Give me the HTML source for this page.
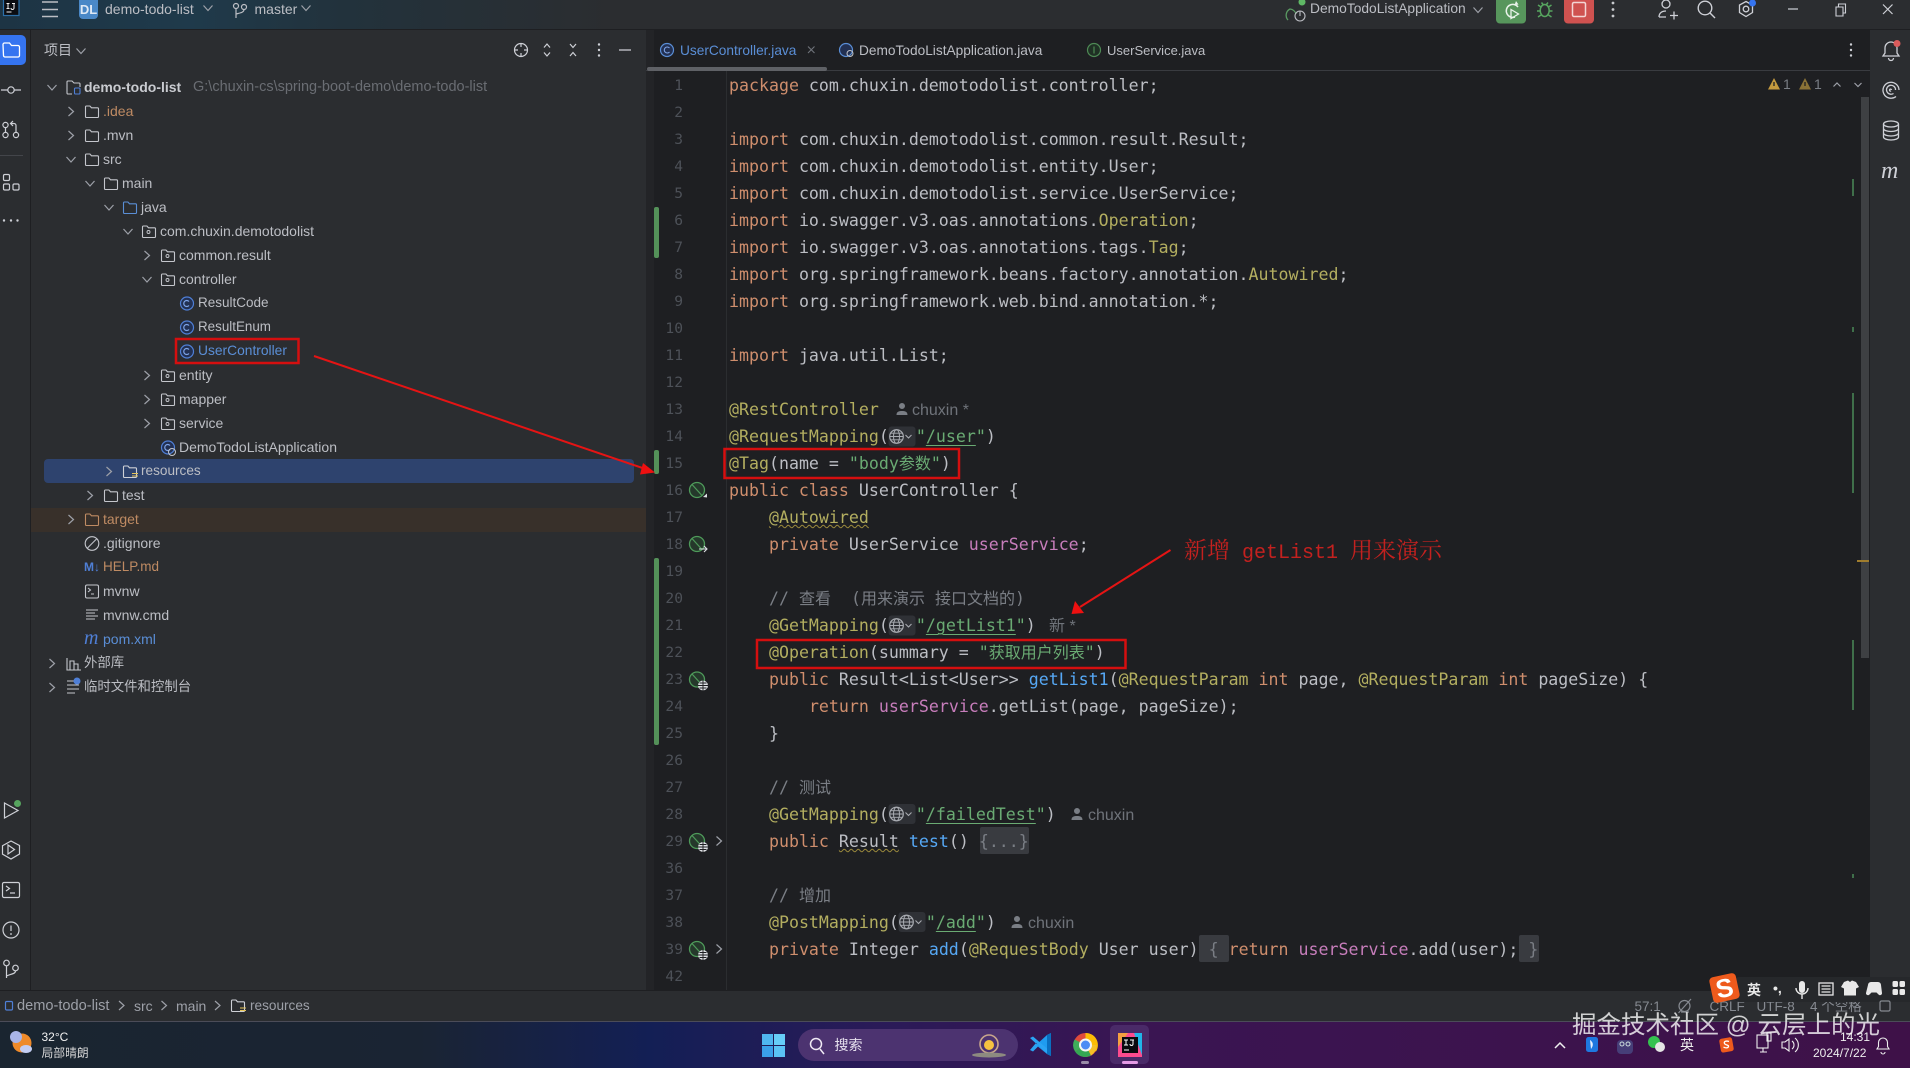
<!DOCTYPE html>
<html lang="zh">
<head>
<meta charset="utf-8">
<title>demo-todo-list</title>
<style>
html,body{margin:0;padding:0;background:#2b2d30}
body{width:1910px;height:1068px;overflow:hidden;position:relative;font-family:"Liberation Sans","Noto Sans CJK SC",sans-serif;font-size:14px;color:#bcbec4}
.b{position:absolute}
.t{position:absolute;white-space:pre;line-height:24px;font-size:14px;color:#bcbec4}
.o{color:#bf8b63}
.bl{color:#5a8ed6}
pre{margin:0;position:absolute;left:729px;top:72px;font-family:"DejaVu Sans Mono","Noto Sans CJK SC",monospace;font-size:16.6px;line-height:27px;color:#bcbec4}
#nums{left:645px;width:38px;text-align:right;font-size:14.6px;color:#4d5158}
i{font-style:normal}
.z{font-size:16px;font-weight:normal}
.k{color:#cf8e6d}.a{color:#b3ae60}.s{color:#6aab73}.f{color:#c77dbb}.m{color:#56a8f5}.c{color:#7a7e85}
.u{text-decoration:underline;text-decoration-thickness:1px;text-underline-offset:3px}
.w{text-decoration:underline wavy #9c8a3c 1px}
.g{display:inline-block;width:27px;height:1px}
.h{position:absolute;white-space:pre;font-size:16px;line-height:27px;color:#6f737a}
</style>
</head>
<body>
<!-- backgrounds -->
<div class="b" style="left:0;top:0;width:1910px;height:29px;background:linear-gradient(90deg,#1d3444 0,#1f3a4b 10%,#22323c 18%,#2b2d30 32%)"></div>
<div class="b" style="left:0;top:29px;width:1910px;height:1px;background:#1e1f22"></div>
<div class="b" style="left:30px;top:30px;width:1px;height:960px;background:#1e1f22"></div>
<div class="b" style="left:646px;top:30px;width:1224px;height:960px;background:#1e1f22"></div>
<div class="b" style="left:646px;top:30px;width:8px;height:960px;background:#232427"></div>
<div class="b" style="left:646px;top:70px;width:1224px;height:1px;background:#393b40"></div>
<div class="b" style="left:647px;top:67px;width:180px;height:4px;border-radius:2px;background:#5f6166"></div>
<div class="b" style="left:726px;top:71px;width:1px;height:919px;background:#2b2d30"></div>
<div class="b" style="left:1861px;top:97px;width:8px;height:561px;background:#3e4043"></div>
<div class="b" style="left:1851.500px;top:179px;width:2px;height:17px;background:#3f6f4a"></div>
<div class="b" style="left:1851.500px;top:327px;width:2px;height:5px;background:#3f6f4a"></div>
<div class="b" style="left:1851.500px;top:393px;width:2px;height:100px;background:#3f6f4a"></div>
<div class="b" style="left:1851.500px;top:640px;width:2px;height:70px;background:#3f6f4a"></div>
<div class="b" style="left:1857px;top:560px;width:12px;height:2px;background:#a07d2e"></div>
<div class="b" style="left:1851.500px;top:874px;width:2px;height:4px;background:#3f6f4a"></div>
<div class="b" style="left:44px;top:459px;width:589.500px;height:24px;background:#2e436e;border-radius:4px"></div>
<div class="b" style="left:31px;top:507.500px;width:615px;height:24px;background:#38302a"></div>
<div class="b" style="left:0;top:35px;width:26px;height:30px;background:#3574f0;border-radius:0 5px 5px 0"></div>
<div class="b" style="left:0;top:155px;width:23px;height:1px;background:#43454a"></div>
<div class="b" style="left:654px;top:207px;width:5px;height:51px;background:#549159;border-radius:2px"></div>
<div class="b" style="left:654px;top:450px;width:5px;height:24px;background:#549159;border-radius:2px"></div>
<div class="b" style="left:654px;top:558px;width:5px;height:187px;background:#549159;border-radius:2px"></div>
<div class="b" style="left:979.500px;top:827px;width:49.500px;height:27px;background:#393b40;border-radius:2px"></div>
<div class="b" style="left:1199px;top:935px;width:30px;height:27px;background:#393b40;border-radius:2px"></div>
<div class="b" style="left:1519px;top:935px;width:20px;height:27px;background:#393b40;border-radius:2px"></div>
<div class="b" style="left:0;top:990px;width:1910px;height:1px;background:#1e1f22"></div>
<div class="b" style="left:0;top:1022px;width:1910px;height:46px;background:linear-gradient(90deg,#1a2530 0,#1a2433 22%,#131f55 34%,#2a1a58 46%,#3a1552 60%,#3e1148 100%)"></div>
<div class="b" style="left:0;top:1021px;width:1910px;height:1px;background:#4b4c58"></div>
<div class="b" style="left:798px;top:1029px;width:219.500px;height:32px;border-radius:16px;background:#4c3370"></div>
<div class="b" style="left:1110px;top:1025px;width:39px;height:39px;border-radius:5px;background:#4a2a68"></div>
<div class="b" style="left:1122px;top:1061px;width:16px;height:3px;border-radius:2px;background:#e59ae6"></div>
<div class="b" style="left:1081px;top:1061px;width:8px;height:3px;border-radius:2px;background:#9a8ca8"></div>

<!-- title bar text -->
<div class="b" style="left:79px;top:0;width:19px;height:19px;background:#4a88c7;border-radius:0 0 4px 4px;color:#dfe9f5;font-size:13px;font-weight:bold;line-height:19px;text-align:center">DL</div>
<div class="t" style="left:105px;top:-3px">demo-todo-list</div>
<div class="t" style="left:254.500px;top:-3px">master</div>
<div class="t" style="left:1310px;top:-3px;font-size:13.8px">DemoTodoListApplication</div>

<!-- project header -->
<div class="t" style="left:44px;top:38px;font-size:14px">项目</div>

<!-- tree -->
<div class="t" style="left:84px;top:75px;font-weight:bold;color:#c9cbd0">demo-todo-list</div>
<div class="t" style="left:193px;top:75px;color:#6a6d73;font-size:14.5px">G:\chuxin-cs\spring-boot-demo\demo-todo-list</div>
<div class="t o" style="left:103px;top:99px">.idea</div>
<div class="t" style="left:103px;top:123px">.mvn</div>
<div class="t" style="left:103px;top:147px">src</div>
<div class="t" style="left:122px;top:171px">main</div>
<div class="t" style="left:141px;top:195px">java</div>
<div class="t" style="left:160px;top:219px">com.chuxin.demotodolist</div>
<div class="t" style="left:179px;top:243px">common.result</div>
<div class="t" style="left:179px;top:267px">controller</div>
<div class="t" style="left:198px;top:291px;font-size:13.5px">ResultCode</div>
<div class="t" style="left:198px;top:315px;font-size:13.4px">ResultEnum</div>
<div class="t bl" style="left:198px;top:339px;font-size:13.8px">UserController</div>
<div class="t" style="left:179px;top:363px">entity</div>
<div class="t" style="left:179px;top:387px">mapper</div>
<div class="t" style="left:179px;top:411px">service</div>
<div class="t" style="left:179px;top:435px">DemoTodoListApplication</div>
<div class="t" style="left:141px;top:459px;font-size:13.6px">resources</div>
<div class="t" style="left:122px;top:483px">test</div>
<div class="t o" style="left:103px;top:507px">target</div>
<div class="t" style="left:103px;top:531px">.gitignore</div>
<div class="t o" style="left:103px;top:555px;font-size:13.5px">HELP.md</div>
<div class="t" style="left:103px;top:579px">mvnw</div>
<div class="t" style="left:103px;top:603px">mvnw.cmd</div>
<div class="t bl" style="left:103px;top:627px">pom.xml</div>
<div class="t" style="left:84px;top:651px;font-size:13.4px">外部库</div>
<div class="t" style="left:84px;top:675px;font-size:13.4px">临时文件和控制台</div>
<div class="t" style="left:84px;top:555px;color:#4f7fd6;font-weight:bold;font-size:12px;line-height:24px;width:16px">M↓</div>
<div class="t" style="left:84px;top:627px;color:#4f7fd6;font-style:italic;font-size:20px;font-family:'Liberation Serif',serif;line-height:22px">m</div>

<!-- tabs -->
<div class="t" style="left:680px;top:38.500px;color:#5a8ed6;font-size:13.7px">UserController.java</div>
<div class="t" style="left:859px;top:38.500px;font-size:13.7px">DemoTodoListApplication.java</div>
<div class="t" style="left:1107px;top:38.500px;font-size:13px">UserService.java</div>

<!-- warnings -->
<div class="t" style="left:1783px;top:72px;color:#7a7e85;font-size:14px">1</div>
<div class="t" style="left:1814px;top:72px;color:#7a7e85;font-size:14px">1</div>

<!-- line numbers -->
<pre id="nums">1
2
3
4
5
6
7
8
9
10
11
12
13
14
15
16
17
18
19
20
21
22
23
24
25
26
27
28
29
36
37
38
39
42</pre>

<!-- code -->
<pre><i class="k">package</i> com.chuxin.demotodolist.controller;

<i class="k">import</i> com.chuxin.demotodolist.common.result.Result;
<i class="k">import</i> com.chuxin.demotodolist.entity.User;
<i class="k">import</i> com.chuxin.demotodolist.service.UserService;
<i class="k">import</i> io.swagger.v3.oas.annotations.<i class="a">Operation</i>;
<i class="k">import</i> io.swagger.v3.oas.annotations.tags.<i class="a">Tag</i>;
<i class="k">import</i> org.springframework.beans.factory.annotation.<i class="a">Autowired</i>;
<i class="k">import</i> org.springframework.web.bind.annotation.*;

<i class="k">import</i> java.util.List;

<i class="a">@RestController</i>
<i class="a">@RequestMapping</i>(<span class="g"></span><i class="s">"<i class="u">/user</i>"</i>)
<i class="a">@Tag</i>(name = <i class="s">"body<i class="z">参数</i>"</i>)
<i class="k">public class</i> UserController {
    <i class="a w">@Autowired</i>
    <i class="k">private</i> UserService <i class="f">userService</i>;

    <i class="c">// <i class="z">查看</i>  (<i class="z">用来演示</i> <i class="z">接口文档的</i>)</i>
    <i class="a">@GetMapping</i>(<span class="g"></span><i class="s">"<i class="u">/getList1</i>"</i>)
    <i class="a">@Operation</i>(summary = <i class="s">"<i class="z">获取用户列表</i>"</i>)
    <i class="k">public</i> Result&lt;List&lt;User&gt;&gt; <i class="m">getList1</i>(<i class="a">@RequestParam</i> <i class="k">int</i> page, <i class="a">@RequestParam</i> <i class="k">int</i> pageSize) {
        <i class="k">return</i> <i class="f">userService</i>.getList(page, pageSize);
    }

    <i class="c">// <i class="z">测试</i></i>
    <i class="a">@GetMapping</i>(<span class="g"></span><i class="s">"<i class="u">/failedTest</i>"</i>)
    <i class="k">public</i> <i class="w">Result</i> <i class="m">test</i>() <i class="c">{...}</i>

    <i class="c">// <i class="z">增加</i></i>
    <i class="a">@PostMapping</i>(<span class="g"></span><i class="s">"<i class="u">/add</i>"</i>)
    <i class="k">private</i> Integer <i class="m">add</i>(<i class="a">@RequestBody</i> User user)<i class="c"> { </i><i class="k">return</i> <i class="f">userService</i>.add(user);<i class="c"> }</i></pre>

<!-- inlay hints -->
<div class="h" style="left:912px;top:397px">chuxin *</div>
<div class="h" style="left:1049px;top:613px">新 *</div>
<div class="h" style="left:1088px;top:802px">chuxin</div>
<div class="h" style="left:1028px;top:910px">chuxin</div>

<!-- status bar -->
<div class="t" style="left:17px;top:993.500px;color:#9da0a8;font-size:14.6px">demo-todo-list</div>
<div class="t" style="left:134px;top:993.500px;color:#9da0a8">src</div>
<div class="t" style="left:176px;top:993.500px;color:#9da0a8">main</div>
<div class="t" style="left:250px;top:993.500px;color:#9da0a8;font-size:13.6px">resources</div>
<div class="t" style="left:1634.500px;top:994.500px;color:#868a91;font-size:13.5px">57:1</div>
<div class="t" style="left:1709.500px;top:994.500px;color:#868a91;font-size:13.5px">CRLF</div>
<div class="t" style="left:1756.500px;top:994.500px;color:#868a91;font-size:13.5px">UTF-8</div>
<div class="t" style="left:1810px;top:994.500px;color:#868a91;font-size:13.5px">4 个空格</div>

<!-- sogou bar -->
<div class="b" style="left:1735px;top:977px;width:175px;height:25px;background:#26282b;border-radius:4px 0 0 4px"></div>
<div class="b" style="left:1711px;top:975px;width:27px;height:26px;background:#ee5a1c;border-radius:4px;transform:rotate(-12deg);color:#fff;font:bold 26px/26px 'Liberation Sans',sans-serif;text-align:center">S</div>
<div class="t" style="left:1747px;top:978px;color:#e8e8e8;font-weight:bold;font-size:14px">英</div>
<div class="t" style="left:1773px;top:976px;color:#e8e8e8;font-weight:bold;font-size:14px">•,</div>

<!-- taskbar text -->
<div class="t" style="left:41.500px;top:1025px;color:#f0f0f0;font-size:12px">32°C</div>
<div class="t" style="left:41.500px;top:1041px;color:#d8d8d8;font-size:11.8px">局部晴朗</div>
<div class="t" style="left:834.500px;top:1033px;color:#e6e0ee;font-size:14px">搜索</div>
<div class="t" style="left:1680px;top:1033px;color:#eee;font-size:14px">英</div>
<div class="t" style="left:1840px;top:1025px;color:#eee;font-size:12px">14:31</div>
<div class="t" style="left:1813px;top:1041px;color:#eee;font-size:12px">2024/7/22</div>

<!-- svg overlay -->
<svg class="b" style="left:0;top:0" width="1910" height="1068" viewBox="0 0 1910 1068" fill="none">
<defs>
<path id="cr" d="M-2.500 -4.500L2.500 0L-2.500 4.500" stroke="#9da0a8" stroke-width="1.200"/>
<path id="cd" d="M-4.500 -2.500L0 2.500L4.500 -2.500" stroke="#9da0a8" stroke-width="1.200"/>
<path id="fo" d="M-6.500 -4.500a1 1 0 0 1 1-1h3.400l1.600 1.800h6a1 1 0 0 1 1 1v7.700a1 1 0 0 1-1 1h-11a1 1 0 0 1-1-1z" stroke-width="1.100"/>
<g id="pk"><use href="#fo" stroke="#c4c6cc"/><rect x="-2" y="-1" width="3" height="3" rx="1.500" stroke="#c4c6cc" stroke-width=".9"/></g>
<g id="cl"><circle r="6.500" stroke="#4f7fd6" stroke-width="1.200" fill="#223052"/><path d="M2 -2a3 3 0 1 0 0 4" stroke="#7ea4e8" stroke-width="1.200"/></g>
<g id="gl"><rect x="-8" y="-10" width="27" height="20" rx="3" fill="#2f3136"/><circle cx="0" cy="0" r="6.800" stroke="#a8abb1" stroke-width="1.200"/><ellipse rx="3" ry="6.800" stroke="#a8abb1" stroke-width="1"/><path d="M-6.800 0H6.800M-5.800 -3.300H5.800M-5.800 3.300H5.800" stroke="#a8abb1" stroke-width=".9"/><path d="M9 -1.500L12 1.500L15 -1.500" stroke="#a8abb1" stroke-width="1.100"/></g>
<g id="sp"><circle r="7.500" stroke="#4e9a5a" stroke-width="1.300" fill="#25382b"/><path d="M-5 -5.500L5 5.500" stroke="#4e9a5a" stroke-width="1.200"/></g>
<g id="sg"><use href="#sp"/><circle cx="6" cy="6" r="5" fill="#dfe1e5"/><path d="M1 6H11M6 1V11M2.500 3.500H9.500M2.500 8.500H9.500" stroke="#1e1f22" stroke-width=".9"/></g>
<path id="pe" d="M-3 -4a3 3 0 1 1 6 0a3 3 0 1 1-6 0zM-5.500 5c0-3.500 2.500-4 5.500-4s5.500 .5 5.500 4z" fill="#7a7e85"/>
</defs>

<!-- top bar icons -->
<rect x="3.500" y="-1" width="15.500" height="16.500" fill="#0b0d12" stroke="#2c6fa8" stroke-width="1.200"/>
<path d="M6.500 3.500h3M8 3.500v5M6.500 8.500h3M12 3.500h3M14 3.500v4.500a1.500 1.500 0 0 1-3 0M6.500 12h5" stroke="#f0f0f0" stroke-width="1"/>
<path d="M42 2H58M42 9.500H58M42 16.500H58" stroke="#bcbec4" stroke-width="1.400"/>
<use href="#cd" x="208" y="8"/><use href="#cd" x="306" y="8"/>
<g stroke="#bcbec4" stroke-width="1.200"><circle cx="236" cy="6" r="2.500"/><circle cx="244" cy="7" r="2.500"/><path d="M236 8.500V18M244 9.500c0 3-4 3.500-8 4.500"/></g>
<g stroke="#5a9a62" stroke-width="1.300"><path d="M1296 14a7 7 0 0 0-6-5 7 7 0 0 0-2 11"/></g>
<circle cx="1302" cy="2" r="3.500" fill="#5fb865"/>
<g stroke="#bcbec4" stroke-width="1.100"><circle cx="1300" cy="16" r="5"/><path d="M1300 11v5"/></g>
<use href="#cd" x="1478" y="10"/>
<rect x="1496" y="-4" width="30" height="27.500" rx="4" fill="#57965c"/>
<path d="M1518 7a6.500 6.500 0 1 0-3 10" stroke="#e9f3ea" stroke-width="1.500"/>
<path d="M1511 9.500l7.500 4.500l-7.500 4.500z" stroke="#e9f3ea" stroke-width="1.300"/>
<path d="M1516 1l2.500 3.500l-4 .8z" fill="#e9f3ea"/>
<g stroke="#57a55f" stroke-width="1.500"><ellipse cx="1544.700" cy="10.500" rx="4.500" ry="6"/><path d="M1538 5l3 2M1551.500 5l-3 2M1537 11h3M1552.500 11h-3M1538 17l3-2M1551.500 17l-3-2M1541.500 2.500l1.500 2M1548 2.500l-1.500 2"/></g>
<rect x="1564" y="-4" width="30" height="27.500" rx="4" fill="#cf5250"/>
<rect x="1572.500" y="2.500" width="13" height="14" rx="1.500" stroke="#f3d6d5" stroke-width="1.500"/>
<g fill="#c8cace"><circle cx="1613" cy="3" r="1.400"/><circle cx="1613" cy="9.500" r="1.400"/><circle cx="1613" cy="16" r="1.400"/></g>
<g stroke="#ced0d6" stroke-width="1.300"><circle cx="1666" cy="4" r="4"/><path d="M1659 17c0-4 3-6 7-6M1659 17h7M1670 15.500h8M1674 11.500v8"/></g>
<g stroke="#ced0d6" stroke-width="1.400"><circle cx="1705" cy="8" r="6.800"/><path d="M1710 13l5 5"/></g>
<g stroke="#ced0d6" stroke-width="1.300"><path d="M1746 1.500l6.500 3.500v7.500l-6.500 4l-6.500-4v-7.500z"/><circle cx="1746" cy="9" r="2.800"/></g>
<circle cx="1752.500" cy="3" r="3.500" fill="#3574f0"/>
<path d="M1788 9H1798" stroke="#ced0d6" stroke-width="1.200"/>
<path d="M1836 7h7v9h-7zM1838.500 7V4h7v9h-2.500" stroke="#ced0d6" stroke-width="1.100"/>
<path d="M1883 4.500l9.500 9.500M1892.500 4.500l-9.500 9.500" stroke="#ced0d6" stroke-width="1.200"/>

<!-- left strip -->
<path d="M3 44.500a1.500 1.500 0 0 1 1.500-1.500h5l2 2.500h6.500a1.500 1.500 0 0 1 1.500 1.500v8.500a1.500 1.500 0 0 1-1.500 1.500h-13a1.500 1.500 0 0 1-1.500-1.500z" stroke="#fff" stroke-width="1.300"/>
<g stroke="#ced0d6" stroke-width="1.200">
<circle cx="11" cy="90" r="3.200"/><path d="M1 90H7.500M14.500 90H21"/>
<circle cx="5.500" cy="125" r="2.600"/><circle cx="5.500" cy="135" r="2.600"/><circle cx="16" cy="135" r="2.600"/><path d="M5.500 127.500V132.500M16 132.500V125.500a2 2 0 0 0-2-2H11M13 121l-2.500 2.500L13 126"/>
<rect x="3.500" y="174.500" width="6" height="6" rx="1.300"/><rect x="3.500" y="184" width="6" height="6" rx="1.300"/><rect x="13" y="184" width="6" height="6" rx="1.300"/>
<path d="M4.500 803l13.500 7.500L4.500 818z"/>
<path d="M11 842l8.500 4.500v8.500L11 860l-8.500-4.800v-8.500z M8 846l6.500 4.500L8 855z" transform="translate(0,-1)"/>
<rect x="2.500" y="882.500" width="17" height="15" rx="1.500"/><path d="M6 886l3.500 2.500L6 891M10 893h5"/>
<circle cx="11" cy="930" r="8"/><path d="M11 925.500V931M11 933V935"/>
<circle cx="6.500" cy="963" r="2.800"/><circle cx="15.500" cy="968" r="2.800"/><path d="M6.500 966V978M15.500 971c0 3-5 3-9 5"/>
</g>
<g fill="#ced0d6"><circle cx="4" cy="220.500" r="1.200"/><circle cx="11" cy="220.500" r="1.200"/><circle cx="17.500" cy="220.500" r="1.200"/></g>
<circle cx="17.500" cy="803.500" r="3.500" fill="#57a55f"/>

<!-- right strip -->
<g stroke="#ced0d6" stroke-width="1.300">
<path d="M1891 42a6 6 0 0 0-6 6v5l-2 3h16l-2-3v-5a6 6 0 0 0-6-6zM1888.500 58a2.500 2.500 0 0 0 5 0"/>
<path d="M1899 90a8 8 0 1 0-3 6.500M1895.500 90a4.500 4.500 0 1 0-2 3.500M1891.500 90a1 1 0 1 0-.5 1"/>
<ellipse cx="1891" cy="124" rx="7.500" ry="3"/><path d="M1883.500 124V137c0 1.700 3.300 3 7.500 3s7.500-1.300 7.500-3V124M1883.500 128.500c0 1.700 3.300 3 7.500 3s7.500-1.300 7.500-3M1883.500 133c0 1.700 3.300 3 7.500 3s7.500-1.300 7.500-3"/>
</g>
<circle cx="1897" cy="43.500" r="3.500" fill="#db5c5c"/>
<text x="1881" y="178" font-family="Liberation Serif,serif" font-style="italic" font-size="24" fill="#ced0d6">m</text>

<!-- project header icons -->
<use href="#cd" x="81" y="51"/>
<g stroke="#ced0d6" stroke-width="1.200">
<circle cx="521" cy="50" r="6.500"/><path d="M521 43v4M521 53v4M514 50h4M524 50h4"/>
<path d="M544 47.500l3-3.500l3 3.500M544 52.500l3 3.500l3-3.500M570 44l3 3.500l3-3.500M570 56l3-3.500l3 3.500M619 50H631"/>
</g>
<g fill="#ced0d6"><circle cx="599" cy="44.500" r="1.200"/><circle cx="599" cy="50" r="1.200"/><circle cx="599" cy="55.500" r="1.200"/>
<circle cx="1851" cy="44.500" r="1.200"/><circle cx="1851" cy="50" r="1.200"/><circle cx="1851" cy="55.500" r="1.200"/></g>

<!-- chevrons -->
<use href="#cd" x="52" y="87.500"/><use href="#cr" x="71" y="111.500"/><use href="#cr" x="71" y="135.500"/><use href="#cd" x="71" y="159.500"/><use href="#cd" x="90" y="183.500"/><use href="#cd" x="109" y="207.500"/><use href="#cd" x="128" y="231.500"/><use href="#cr" x="147" y="255.500"/><use href="#cd" x="147" y="279.500"/><use href="#cr" x="147" y="375.500"/><use href="#cr" x="147" y="399.500"/><use href="#cr" x="147" y="423.500"/><use href="#cr" x="109" y="471.500"/><use href="#cr" x="90" y="495.500"/><use href="#cr" x="71" y="519.500"/><use href="#cr" x="52" y="663.500"/><use href="#cr" x="52" y="687.500"/>

<!-- tree icons -->
<g stroke="#c4c6cc">
<path d="M67 93V82a1 1 0 0 1 1-1h4l2 2h5a1 1 0 0 1 1 1v3M72 94h-4a1 1 0 0 1-1-1" stroke-width="1.100"/>
<use href="#fo" x="92" y="111.500"/><use href="#fo" x="92" y="135.500"/><use href="#fo" x="92" y="159.500"/><use href="#fo" x="111" y="183.500"/>
<use href="#fo" x="111" y="495.500"/>
</g>
<rect x="74.500" y="88" width="5.500" height="6" rx="1" stroke="#4f7fd6" stroke-width="1.100"/>
<use href="#fo" x="130" y="207.500" stroke="#5a8ed6"/>
<use href="#pk" x="149" y="231.500"/><use href="#pk" x="168" y="255.500"/><use href="#pk" x="168" y="279.500"/><use href="#pk" x="168" y="375.500"/><use href="#pk" x="168" y="399.500"/><use href="#pk" x="168" y="423.500"/>
<use href="#cl" x="187" y="303.500"/><use href="#cl" x="187" y="327.500"/><use href="#cl" x="187" y="351.500"/>
<use href="#cl" x="168" y="447.500"/>
<circle cx="172" cy="452" r="3.500" stroke="#c4c6cc" stroke-width="1"/>
<use href="#fo" x="130" y="471.500" stroke="#ced0d6"/>
<path d="M132 473.500h6M132 476h6" stroke="#e6c55a" stroke-width="1"/>
<use href="#fo" x="92" y="519.500" stroke="#bf8b63"/>
<g stroke="#c4c6cc" stroke-width="1.100">
<circle cx="92" cy="543.500" r="6.800"/><path d="M87.500 548L96.500 539"/>
<rect x="85.500" y="585" width="13" height="13" rx="1.500"/><path d="M88 588l2.500 2-2.500 2M91 594h3"/>
<path d="M86 610h12M86 613h9M86 616h12M86 619h9"/>
<path d="M67 658v12h14M70 670v-9h4v9M74 670v-6h4v6"/>
<path d="M67 681h8M67 685h12M67 689h12M67 693h8"/>
</g>
<circle cx="77" cy="681" r="3.500" fill="#4f7fd6"/>

<!-- tab icons -->
<g>
<circle cx="667" cy="50" r="6.500" stroke="#5a8ed6" stroke-width="1.200" fill="#223052"/><path d="M669.500 48a3 3 0 1 0 0 4" stroke="#7ea4e8" stroke-width="1.100"/>
<path d="M808 46.500l6.500 6.500M814.500 46.500l-6.500 6.500" stroke="#6f737a" stroke-width="1.100"/>
<circle cx="846" cy="50" r="6.500" stroke="#5a8ed6" stroke-width="1.200" fill="#223052"/><circle cx="850" cy="53.500" r="3" stroke="#c4c6cc" stroke-width="1"/>
<circle cx="1094" cy="50" r="6.500" stroke="#4e8a55" stroke-width="1.200" fill="#1f3024"/><path d="M1094 46.500V53.500" stroke="#4e8a55" stroke-width="1.200"/>
</g>

<!-- warning icons -->
<path d="M1774 78l6 11.500h-12z" fill="#c59a3e"/><path d="M1805 78l6 11.500h-12z" fill="#8a7236"/>
<path d="M1774 82v4M1805 82v4" stroke="#1e1f22" stroke-width="1.300"/>
<path d="M1833.500 86.500l3.500-3.500l3.500 3.500M1854.500 83l3.500 3.500l3.500-3.500" stroke="#9da0a8" stroke-width="1.200"/>

<!-- gutter icons -->
<use href="#sp" x="697" y="490"/><path d="M703 497l4-3.500v4z" fill="#dfe1e5"/>
<use href="#sp" x="697" y="544"/><path d="M699 549h8M704 546l3 3-3 3" stroke="#dfe1e5" stroke-width="1.100"/>
<use href="#sg" x="697" y="679.500"/><use href="#sg" x="697" y="841"/><use href="#sg" x="697" y="949"/>
<use href="#cr" x="719" y="841"/><use href="#cr" x="719" y="949"/>

<!-- inlay globes -->
<use href="#gl" x="896.500" y="436.500"/><use href="#gl" x="896.500" y="625.500"/><use href="#gl" x="896.500" y="814"/><use href="#gl" x="906.500" y="922"/>
<use href="#pe" x="902" y="410"/><use href="#pe" x="1077" y="815"/><use href="#pe" x="1017" y="923"/>

<!-- status icons -->
<rect x="5.500" y="1001.500" width="7" height="8.500" rx="1.200" stroke="#4f7fd6" stroke-width="1.200"/>
<use href="#cr" x="121.500" y="1005.500"/><use href="#cr" x="164" y="1005.500"/><use href="#cr" x="217.500" y="1005.500"/>
<use href="#fo" x="238" y="1005.500" stroke="#ced0d6"/>
<path d="M240 1008h6M240 1010.500h6" stroke="#e6c55a" stroke-width="1"/>
<g stroke="#868a91" stroke-width="1.200"><circle cx="1684.500" cy="1006" r="5.500"/><path d="M1678.500 1013L1691 999M1681 1012h8"/><rect x="1880" y="1001" width="10" height="10" rx="1.500"/></g>

<!-- sogou icons -->
<g fill="#e8e8e8">
<rect x="1799" y="981" width="6" height="12" rx="3"/><path d="M1796 988a6 6 0 0 0 12 0M1802 994v5" stroke="#e8e8e8" stroke-width="1.400" fill="none"/>
<rect x="1819" y="983" width="14" height="12" stroke="#e8e8e8" stroke-width="1.300" fill="none"/><path d="M1821.500 986h9M1821.500 989h9M1821.500 992h9" stroke="#e8e8e8" stroke-width="1.300"/>
<path d="M1844 982l4-1.500l2 1.500l2-1.500l4 1.500l3 5l-3 1.500v7h-12v-7l-3-1.500z"/>
<path d="M1868 985a3 3 0 0 1 3-3h7a3 3 0 0 1 3 3l1 8a2 2 0 0 1-3.500 1.500l-2-2h-5l-2 2a2 2 0 0 1-3.500-1.500z"/>
<rect x="1892.500" y="981" width="5.500" height="6" rx="1.500"/><rect x="1899.500" y="981" width="5.500" height="6" rx="1.500"/><rect x="1892.500" y="989" width="5.500" height="6" rx="1.500"/><rect x="1899.500" y="989" width="5.500" height="6" rx="1.500"/>
</g>

<!-- taskbar icons -->
<circle cx="22" cy="1043" r="9.500" fill="#ee8a2a"/><circle cx="16" cy="1037" r="6" fill="#a9b5e8"/><ellipse cx="26" cy="1049" rx="6" ry="4" fill="#c3cdf2"/>
<g fill="#5bc4f5"><rect x="762" y="1034" width="11" height="11" fill="#4fb6f0"/><rect x="774" y="1034" width="11" height="11" fill="#66cdf8"/><rect x="762" y="1046" width="11" height="11" fill="#3a9fe8"/><rect x="774" y="1046" width="11" height="11" fill="#5ac2f4"/></g>
<circle cx="816" cy="1044" r="5.500" stroke="#f0eaf5" stroke-width="1.500"/><path d="M820 1049l4 5" stroke="#f0eaf5" stroke-width="1.500"/>
<circle cx="989" cy="1044" r="9" stroke="#c8a68c" stroke-width="1.600"/><circle cx="989" cy="1045" r="5" fill="#f5c240"/><ellipse cx="989" cy="1055" rx="17" ry="2.500" fill="#8d8a80"/>
<path d="M1036 1045l11-10 4-2v23l-4-2-11-9z" fill="#1f9cf0"/><path d="M1051 1033v23l-4-2v-19z" fill="#0a6fc0"/><path d="M1030 1038l3-1.500 14 12v5zM1030 1050l3 1.500 6-6-3-2.500z" fill="#2aa4f4"/>
<circle cx="1085.500" cy="1045" r="12" fill="#e04a3c"/><path d="M1085.500 1045L1075 1051.500A12 12 0 0 0 1091 1055.500z" fill="#34a853"/><path d="M1085.500 1033A12 12 0 0 1 1096 1051.500L1085.500 1045z" fill="#fbbc05"/><path d="M1085.500 1045h11a12 12 0 0 1-5.500 10.500z" fill="#f6c026"/><path d="M1085.500 1045L1075 1051.500a12 12 0 0 1 -.5 -12z" fill="#3fae5a"/><circle cx="1085.500" cy="1045" r="5.500" fill="#4c8bf5" stroke="#f4f4f4" stroke-width="2"/>
<rect x="1118" y="1033" width="24" height="24" fill="#fc4b8e"/><path d="M1118 1033h10l-10 14z" fill="#f5a040"/><path d="M1142 1033v22l-8-22z" fill="#21b5e8"/>
<rect x="1122" y="1037" width="16" height="16" fill="#0a0a0e"/>
<path d="M1124 1040h4M1126 1040v5M1124 1045h4M1130 1040h4M1133 1040v4a1.500 1.500 0 0 1-3 0M1124 1050h5" stroke="#fff" stroke-width="1"/>
<path d="M1555 1048l5-5l5 5" stroke="#f0f0f0" stroke-width="1.500"/>
<rect x="1586" y="1037" width="12" height="15" rx="2.500" fill="#1e78e0"/><path d="M1590 1040c3 2 4 5 1 9z" fill="#e8f2ff"/>
<rect x="1617" y="1040" width="16" height="14" rx="4" fill="#463e78"/><circle cx="1622" cy="1044" r="2" stroke="#cdd" stroke-width="1"/><circle cx="1628" cy="1044" r="2" stroke="#cdd" stroke-width="1"/>
<circle cx="1654" cy="1042" r="6" fill="#34c24f"/><circle cx="1660" cy="1047" r="5" fill="#e5e5e5"/>
<rect x="1720" y="1038" width="13" height="14" rx="2.500" fill="#ee5a1c" transform="rotate(-10 1726 1045)"/><path d="M1729 1041.500c-3-1-5.500 0-4.500 2s4.500 1 4 3c-.5 2-3.500 1.500-5 .5" stroke="#fff" stroke-width="1.300"/>
<g stroke="#eee" stroke-width="1.100"><rect x="1757" y="1035" width="11" height="13"/><rect x="1767" y="1033" width="4" height="8"/><path d="M1760 1052h7M1763 1048v4"/>
<path d="M1782 1042h3l4-3v12l-4-3h-3zM1792 1041a5 5 0 0 1 0 8M1795 1038a9 9 0 0 1 0 14"/>
<path d="M1883 1038a4.500 4.500 0 0 0-4.500 4.500v4l-1.500 2.500h12l-1.500-2.500v-4a4.500 4.500 0 0 0-4.500-4.500zM1881 1052a2 2 0 0 0 4 0"/></g>

<!-- annotations -->
<g stroke="#d50f0f" stroke-width="2.500">
<rect x="176" y="339" width="122.500" height="24"/>
<rect x="724.500" y="449" width="234.500" height="29"/>
<rect x="757" y="640" width="368.500" height="28"/>
</g>
<path d="M314 356L644 468.500" stroke="#e51414" stroke-width="2"/>
<path d="M655 472.500L643 463L640 474.500z" fill="#ee1010"/>
<path d="M1170.500 550L1080 607" stroke="#e51414" stroke-width="2"/>
<path d="M1071.500 614L1075 601L1084 613z" fill="#ee1010"/>
</svg>

<!-- annotation text -->
<div class="t" style="left:1184px;top:537px;line-height:30px;font-family:'Liberation Mono','Noto Serif CJK SC',serif;font-size:23px;color:#c4211f">新增<span style="font-size:20px"> getList1 </span>用来演示</div>
<!-- watermark -->
<div class="t" style="left:1572px;top:1010px;line-height:32px;font-size:24.500px;color:rgba(255,255,255,.78)">掘金技术社区 @ 云层上的光</div>
</body>
</html>
